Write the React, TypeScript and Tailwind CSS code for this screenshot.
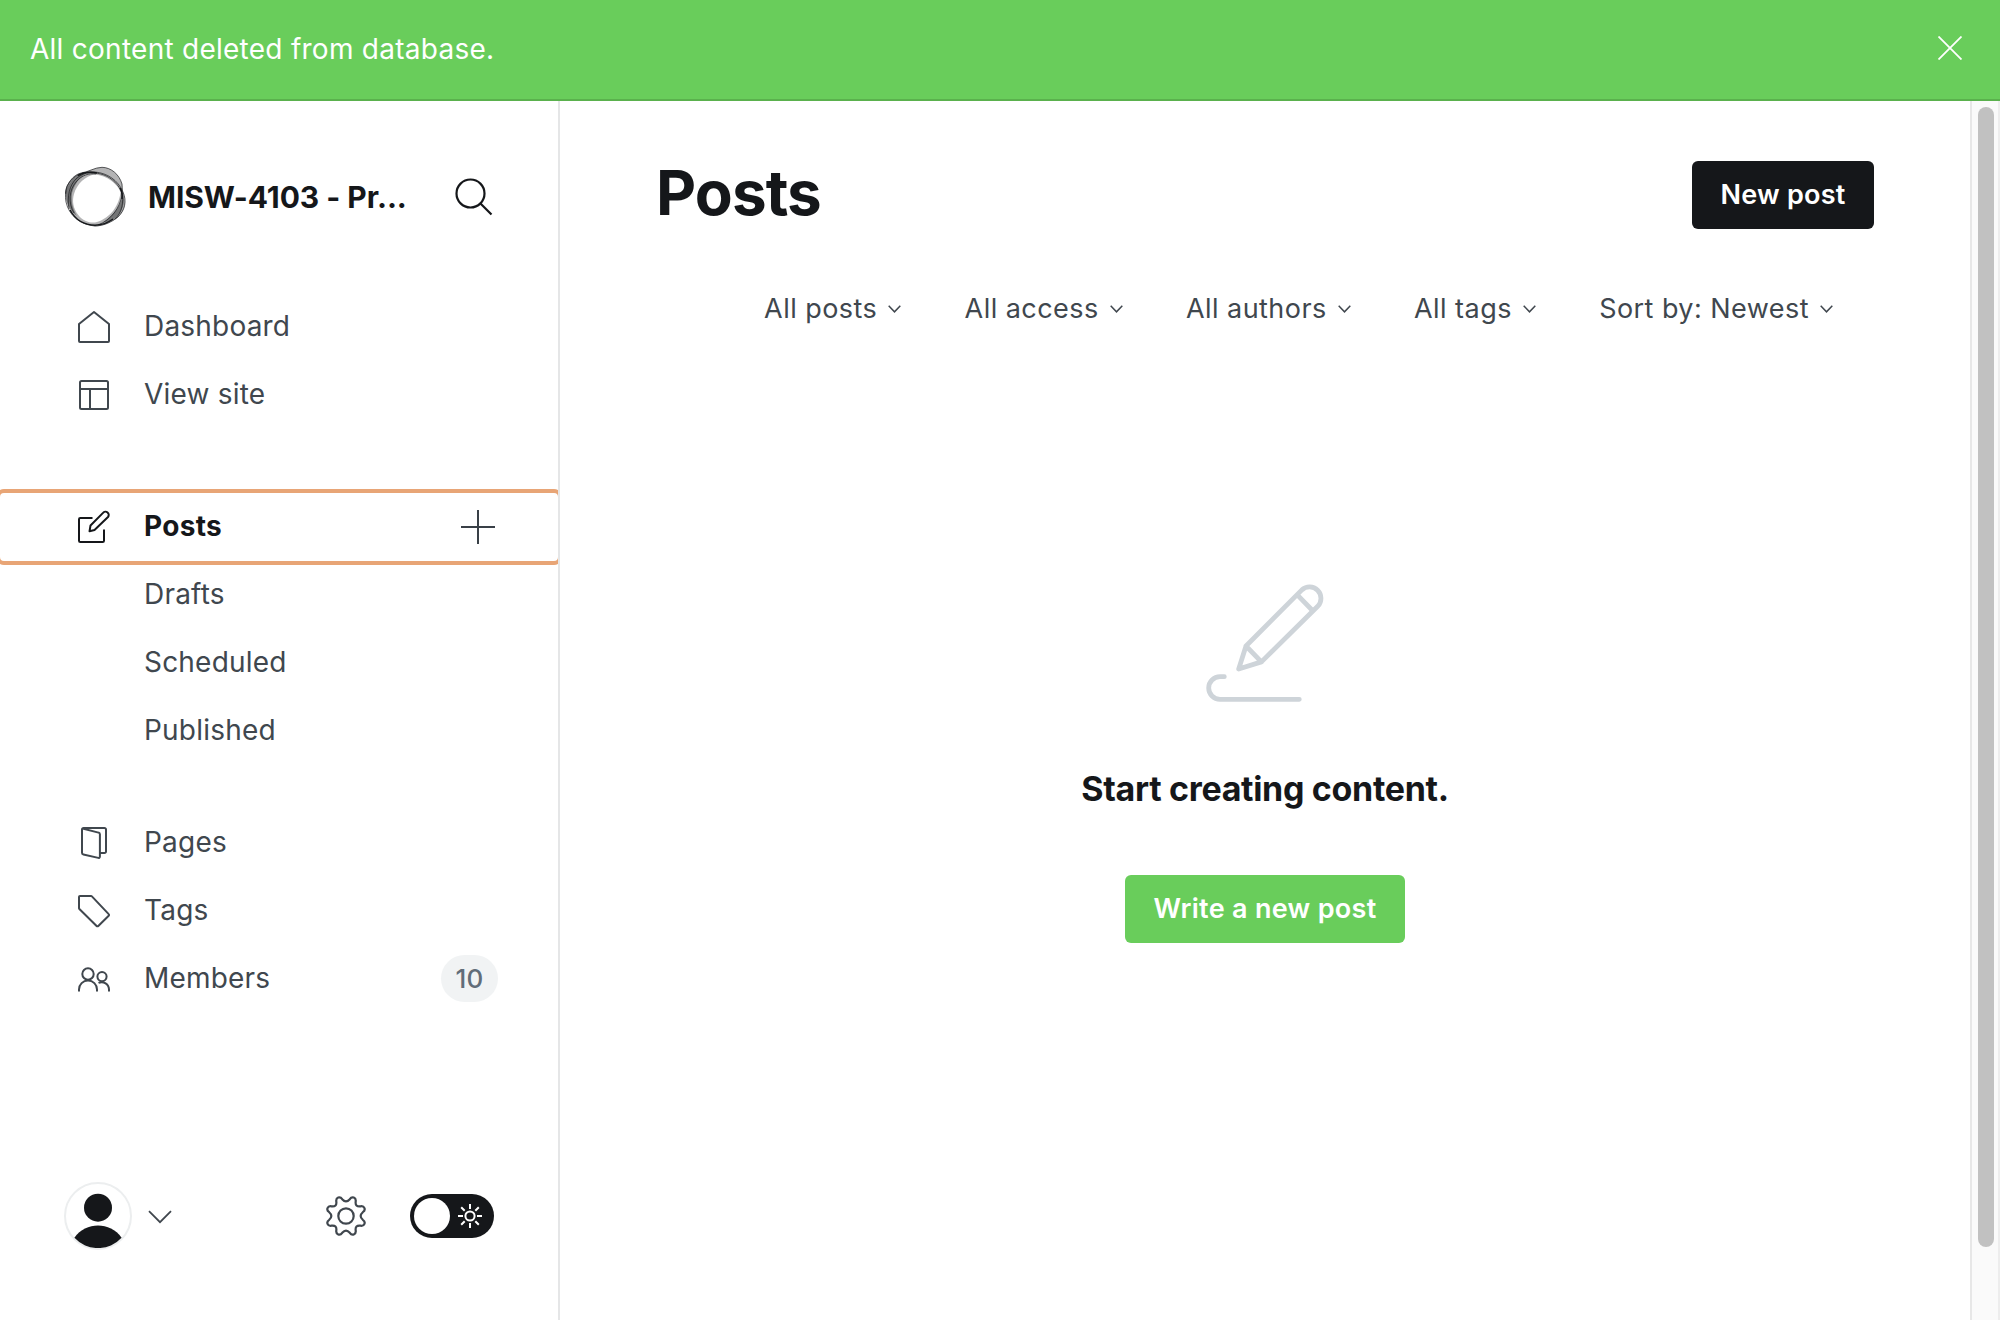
import React from "react";

type IconProps = { children: React.ReactNode; className?: string };

function NavIcon({ children, className = "" }: IconProps) {
  return (
    <svg
      width="32"
      height="32"
      viewBox="0 0 32 32"
      fill="none"
      stroke="currentColor"
      strokeWidth="2"
      strokeLinejoin="round"
      className={`shrink-0 overflow-visible ${className}`}
    >
      {children}
    </svg>
  );
}

const HomeIcon = () => (
  <NavIcon>
    <path d="M1 13 L16 1 L31 13 V30 a1 1 0 0 1 -1 1 H2 a1 1 0 0 1 -1 -1 Z" />
  </NavIcon>
);

const SiteIcon = () => (
  <NavIcon>
    <rect x="2" y="2" width="28" height="28" rx="1.5" />
    <path d="M2 10 H30 M12 10 V30" />
  </NavIcon>
);

const EditIcon = () => (
  <NavIcon>
    <path d="M14.5 7 H2.3 A1.3 1.3 0 0 0 1 8.3 V29.700 A1.3 1.3 0 0 0 2.300 31 H24.700 A1.3 1.300 0 0 0 26 29.700 V18.500" />
    <path d="M16.500 19 L11.500 20.300 L12.500 14.500 L25 1.900 A3 3 0 0 1 30 6 Z" />
  </NavIcon>
);

const PagesIcon = () => (
  <NavIcon>
    <path d="M4.500 1.500 L20.500 5.600 a1.800 1.800 0 0 1 1.400 1.700 V29.600 a1.300 1.300 0 0 1 -1.600 1.300 L5.400 27.500 A1.800 1.800 0 0 1 4 25.700 V2.500 A1.500 1.500 0 0 1 5.500 1 H26.500 A1.500 1.500 0 0 1 28 2.500 V24.600 A1.500 1.500 0 0 1 26.500 26.100 H22" />
  </NavIcon>
);

const TagIcon = () => (
  <NavIcon>
    <path d="M2 1 H13 a1.300 1.300 0 0 1 .9 .4 L30.700 19.100 a1.200 1.200 0 0 1 0 1.700 L20.300 31 a1.200 1.200 0 0 1 -1.700 0 L1.400 14 A1.300 1.300 0 0 1 1 13 V2 A1 1 0 0 1 2 1 Z" />
  </NavIcon>
);

const MembersIcon = () => (
  <NavIcon>
    <circle cx="10" cy="11" r="5.700" />
    <path d="M1 28.500 V26.500 A9 9 0 0 1 19 26.500 V28.500" />
    <circle cx="24" cy="13.600" r="4.600" />
    <path d="M20.500 19.900 A7.400 7.400 0 0 1 31 26.600 V28.500" />
  </NavIcon>
);

function Logo() {
  return (
    <svg width="62" height="62" viewBox="0 0 62 62" fill="none" className="shrink-0">
      <path
        fillRule="evenodd"
        fill="#15171a"
        fillOpacity="0.32"
        d="M0.500 26 C2 17 8 9 16 7 C24 6 29 1.500 37 1.300 C46 1.500 54 8 57 18 C57.500 22 57.500 24 58 26 C61 34 61 42 56 48 C51 54 47 55 43 57.500 C37 60 33 60.500 28 60 C17 58 8 50 4 42 C1 36 0 31 0.500 26 Z M30 8.500 C20 10 12 18 9 28 C7 35 8 42 13.300 49 C18 55 24 57 30 56.500 C35 56 43 51 48 45 C53 38 55 32 55.500 26 C52 17 42 10 30 8.500 Z"
      />
      <path
        fill="#15171a"
        fillOpacity="0.4"
        d="M1 25 C4 15 12 8 22 6.500 C14 12 9 19 7 27 C6 34 7 42 12 50 C5 45 0 36 1 25 Z M58 27 C57 38 50 48 38 56.500 C44 57 51 53 55 47 C59 41 60 34 58 27 Z"
      />
      <g stroke="#15171a" strokeOpacity="0.750" strokeWidth="0.900">
        <path d="M0.700 28 C1 18 8 9 16 7 C24 6 29 1.500 37 1.300 C46 1.500 54 8 57 18 C57.500 23 57 26 57 29 C55 42 46 54 33 59" />
        <path d="M2 20 C8 9 19 5 30 6 C42 7 53 14 58 26 C62 35 60 44 53 51 C47 56 38 60 30 60 C16 59 4 50 1 36 C0 30 0 25 2 20" />
        <path d="M4 43 C2 31 4 19 12 12 C20 5 30 6 39 9 C47 12 54 19 57 27 C59 35 57 47 50 53" />
        <path d="M9 47 C3 37 4 24 11 16 C17 9 24 7 31 8" />
      </g>
      <path d="M5 44 C10 53 19 59 30 59.200 C38 59 44 56 48 53 M55 22 C57.500 26 57.500 29 57 33 M13 9.500 C18 6.500 25 5.500 32 7" stroke="#15171a" strokeWidth="1.500" />
    </svg>
  );
}

function GearIcon() {
  return (
    <svg
      width="40"
      height="40"
      viewBox="-20 -20 40 40"
      fill="none"
      stroke="currentColor"
      strokeWidth="2.200"
      strokeLinejoin="round"
      className="shrink-0"
    >
      <circle r="7.700" />
      <path d="M-3.800 -16.800 Q0 -12.500 3.800 -16.800 C6 -20.200 10.300 -18.600 9.700 -14.500 C9.200 -10.800 10.800 -9.200 14.500 -9.700 C18.600 -10.300 20.200 -6 16.800 -3.800 Q12.500 0 16.800 3.800 C20.200 6 18.600 10.300 14.500 9.700 C10.800 9.200 9.200 10.800 9.700 14.500 C10.300 18.600 6 20.200 3.800 16.800 Q0 12.500 -3.800 16.800 C-6 20.200 -10.300 18.600 -9.700 14.500 C-9.200 10.800 -10.800 9.200 -14.500 9.700 C-18.600 10.300 -20.200 6 -16.800 3.800 Q-12.500 0 -16.800 -3.800 C-20.200 -6 -18.600 -10.300 -14.500 -9.700 C-10.800 -9.200 -9.200 -10.800 -9.700 -14.500 C-10.300 -18.600 -6 -20.200 -3.800 -16.800 Z" />
    </svg>
  );
}

function SunIcon() {
  return (
    <svg width="24" height="24" viewBox="-12 -12 24 24" fill="none" stroke="#fff" strokeWidth="2">
      <circle r="4.600" />
      <path d="M0 -12 V-7 M0 7 V12 M-12 0 H-7 M7 0 H12 M-8.800 -8.800 L-5.300 -5.300 M8.800 -8.800 L5.300 -5.300 M-8.800 8.800 L-5.300 5.300 M8.800 8.800 L5.300 5.300" />
    </svg>
  );
}

function NavItem({ icon, label, children }: { icon?: React.ReactNode; label: string; children?: React.ReactNode }) {
  return (
    <a className="flex h-[68px] items-center pl-[78px] pr-[60px]">
      <span className="flex w-[66px] shrink-0">{icon}</span>
      <span className="flex-1 pb-0.5">{label}</span>
      {children}
    </a>
  );
}

function Filter({ label }: { label: string }) {
  return (
    <div className="flex items-center gap-[11px]">
      <span>{label}</span>
      <svg width="13" height="8" viewBox="0 0 13 8" fill="none" stroke="currentColor" strokeWidth="1.500">
        <path d="M0.700 0.700 L6.500 6.800 L12.300 0.700" />
      </svg>
    </div>
  );
}

function Sidebar() {
  return (
    <nav className="flex w-[560px] shrink-0 flex-col border-r-2 border-[#e5e6e7] text-[28px] tracking-[0.200px] text-[#40474e]">
      <div className="mt-[65px] flex h-[62px] items-center pl-[65px]">
        <Logo />
        <span className="ml-[21px] w-[289px] whitespace-nowrap text-[30px] font-bold tracking-[-0.050px] text-[#15171a]">
          MISW-4103 - Pr...
        </span>
        <svg width="38" height="38" viewBox="0 0 38 38" fill="none" stroke="#15171a" strokeWidth="2.200" className="ml-[18px]">
          <circle cx="15.500" cy="15.500" r="14" />
          <path d="M25.500 25.500 L36.500 36.500" />
        </svg>
      </div>

      <div className="mt-[65px]">
        <NavItem icon={<HomeIcon />} label="Dashboard" />
        <NavItem icon={<SiteIcon />} label="View site" />
      </div>

      <div className="mt-16">
        <div className="font-bold tracking-[0.300px] text-[#15171a] [clip-path:inset(-4px_0px)]">
          <div className="rounded-[4px] outline-4 outline-[#e8a576]">
            <NavItem icon={<EditIcon />} label="Posts">
              <svg width="34" height="34" viewBox="0 0 34 34" stroke="#394047" strokeWidth="2" className="mr-[3px]">
                <path d="M17 0 V34 M0 17 H34" />
              </svg>
            </NavItem>
          </div>
        </div>
        <NavItem label="Drafts" />
        <NavItem label="Scheduled" />
        <NavItem label="Published" />
      </div>

      <div className="mt-11">
        <NavItem icon={<PagesIcon />} label="Pages" />
        <NavItem icon={<TagIcon />} label="Tags" />
        <NavItem icon={<MembersIcon />} label="Members">
          <span className="mb-px flex h-[47px] w-[57px] items-center justify-center rounded-full bg-[#f1f3f4] text-[26px] font-medium text-[#626d79]">
            10
          </span>
        </NavItem>
      </div>

      <div className="mt-[169px] flex h-[68px] items-center pl-16">
        <div className="flex size-[68px] items-center justify-center rounded-full border-2 border-[#eceeef]">
          <svg width="64" height="64" viewBox="-32 -32 64 64" fill="#15171a">
            <circle cx="0" cy="-8.300" r="14" />
            <path d="M-23.600 21.700 C-12 5.500 12 5.500 23.600 21.700 A32 32 0 0 1 -23.600 21.700 Z" />
          </svg>
        </div>
        <svg width="24" height="14" viewBox="0 0 24 14" fill="none" stroke="currentColor" strokeWidth="1.800" className="ml-4 mt-0.5">
          <path d="M1 1.200 L12 12.200 L23 1.200" />
        </svg>
        <div className="ml-[154px]">
          <GearIcon />
        </div>
        <div className="ml-11 flex h-11 w-[84px] items-center justify-between rounded-full bg-[#15171a] pl-1 pr-3">
          <span className="size-9 rounded-full bg-white" />
          <SunIcon />
        </div>
      </div>
    </nav>
  );
}

function EmptyState() {
  return (
    <div className="mt-[256px] flex flex-col items-center">
      <svg
        width="120"
        height="120"
        viewBox="0 0 120 120"
        fill="none"
        stroke="#ced4d9"
        strokeWidth="4.800"
        strokeLinecap="round"
        strokeLinejoin="round"
      >
        <path d="M41 63 L96.900 6.900 A11.400 11.400 0 0 1 113 23 L56.400 78.900 Z L33.700 86 L56.400 78.900 M92.300 11.800 L107.500 27.500" />
        <path d="M19.300 93.700 H15 A11.300 11.300 0 0 0 15 116.300 H94.300" />
      </svg>
      <h2 className="mt-16 whitespace-nowrap text-[34px] font-bold leading-[44px] tracking-[-0.320px] text-[#15171a]">
        Start creating content.
      </h2>
      <button className="mt-16 h-[68px] w-[280px] rounded-md bg-[#69cd5b] text-[27px] font-semibold tracking-[0.300px] text-white">
        Write a new post
      </button>
    </div>
  );
}

export default function App() {
  return (
    <div className="flex h-[1320px] w-[2000px] flex-col overflow-hidden bg-white font-['Inter',sans-serif] text-[#40474e]">
      <div className="flex h-[101px] shrink-0 items-center justify-between border-b-2 border-[#5ab14d] bg-[#69cd5b] pb-[3px] pl-[30px] pr-[38px] text-[28px] tracking-[0.260px] text-white">
        <span className="pt-0.5">All content deleted from database.</span>
        <svg width="24" height="24" viewBox="0 0 24 24" stroke="currentColor" strokeWidth="1.800">
          <path d="M0.500 0.500 L23.500 23.500 M23.500 0.500 L0.500 23.500" />
        </svg>
      </div>

      <div className="flex min-h-0 flex-1">
        <Sidebar />

        <main className="flex-1">
          <header className="mt-[60px] flex h-[68px] items-center justify-between pl-[96px] pr-24">
            <h1 className="pb-[5px] text-[62px] font-bold leading-none tracking-[-0.900px] text-[#15171a]">Posts</h1>
            <button className="h-[68px] w-[182px] rounded-md bg-[#15171a] text-[27px] font-semibold tracking-[0.250px] text-white">
              New post
            </button>
          </header>
          <div className="mt-[62px] flex h-9 items-center justify-end gap-[63.300px] pr-[137px] text-[27px] tracking-[0.450px]">
            <Filter label="All posts" />
            <Filter label="All access" />
            <Filter label="All authors" />
            <Filter label="All tags" />
            <Filter label="Sort by: Newest" />
          </div>
          <EmptyState />
        </main>

        <div className="w-[30px] shrink-0 border-x-2 border-l-[#e7e7e7] border-r-[#ededed] bg-[#fafafa] pl-1.5 pt-1.5">
          <div className="h-[1140px] w-4 rounded-full bg-[#c1c1c1]" />
        </div>
      </div>
    </div>
  );
}
